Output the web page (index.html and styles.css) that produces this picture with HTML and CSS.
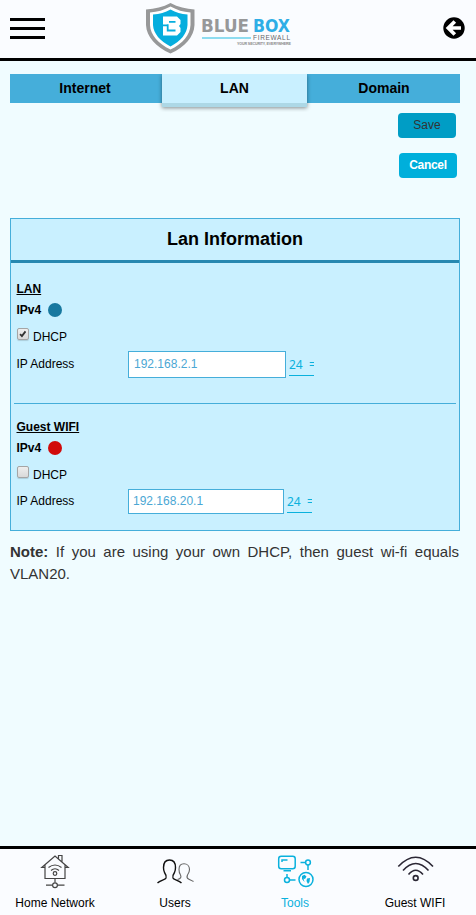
FILE: index.html
```html
<!DOCTYPE html>
<html lang="en">
<head>
<meta charset="utf-8">
<title>Blue Box Firewall</title>
<link rel="stylesheet" href="styles.css">
</head>
<body>
<header class="topbar">
  <div class="menu"><span></span><span></span><span></span></div>
  <svg class="logo" width="150" height="56" viewBox="0 0 150 56">
    <g transform="translate(-1 0)">
      <path d="M25.500 3C33 7 41 9 49.500 9.500V25C49 37 40 47 25.500 53.500C11 47 1.500 37 1 25V9.500C10 9 18 7 25.500 3Z" fill="#979899"/>
      <path d="M25.500 6.500C32 10 38 12 45.500 12.500V25C45 35 38 43.500 25.500 49.500C13 43.500 5.500 35 5 25V12.500C12.500 12 19 10 25.500 6.500Z" fill="#fff"/>
      <path d="M25.500 9.500C31 12.500 36 14 42.500 14.500V25C42 33.500 36 41 25.500 46.500C15 41 8.500 33.500 8 25V14.500C15 14 20 12.500 25.500 9.500Z" fill="#06aede"/>
      <path d="M18 16.500H32L35.500 20V24L34 26L35.500 28V32L32 35.500H18Z" fill="#fff"/>
      <path d="M18 25.300H22.700M24 21.800H30.500M22.700 24.300V30.500H30.500" fill="none" stroke="#06aede" stroke-width="1.800"/>
    </g>
    <text class="brand" x="55" y="32" textLength="48" lengthAdjust="spacingAndGlyphs" fill="#979899">BLUE</text>
    <text class="brand" x="107" y="32" textLength="37" lengthAdjust="spacingAndGlyphs" fill="#2eaee6">BOX</text>
    <path d="M56 38H105" stroke="#8edcf0" stroke-width="2"/>
    <text class="sub" x="107" y="40" textLength="37">FIREWALL</text>
    <text class="motto" x="91" y="44.500" textLength="54">YOUR SECURITY, EVERYWHERE</text>
  </svg>
  <svg class="back" width="22" height="22" viewBox="0 0 22 22">
    <circle cx="11" cy="11" r="10.700" fill="#000"/>
    <path d="M11.800 4.500L5.300 11L11.800 17.500M6 11H18" fill="none" stroke="#fff" stroke-width="3.700"/>
  </svg>
</header>
<main class="content">
  <nav class="tabs">
    <div class="tab">Internet</div>
    <div class="tab active">LAN</div>
    <div class="tab">Domain</div>
  </nav>
  <div class="actions">
    <button class="btn save">Save</button>
    <button class="btn cancel">Cancel</button>
  </div>
  <section class="panel">
    <h2>Lan Information</h2>
    <div class="group">
      <h3>LAN</h3>
      <div class="status">IPv4<i class="dot blue"></i></div>
      <div class="check"><svg class="box" width="12" height="12" viewBox="0 0 12 12"><path d="M2.500 6.200L4.700 8.500L9 2.900" fill="none" stroke="#333" stroke-width="2.200"/></svg><span>DHCP</span></div>
      <div class="row">
        <span class="label">IP Address</span>
        <div class="field">192.168.2.1</div>
        <div class="mask"><span>24</span><span class="eq">=</span></div>
      </div>
    </div>
    <div class="group guest">
      <h3>Guest WIFI</h3>
      <div class="status">IPv4<i class="dot red"></i></div>
      <div class="check"><svg class="box" width="12" height="12"></svg><span>DHCP</span></div>
      <div class="row">
        <span class="label">IP Address</span>
        <div class="field">192.168.20.1</div>
        <div class="mask"><span>24</span><span class="eq">=</span></div>
      </div>
    </div>
  </section>
  <p class="note"><b>Note:</b> If you are using your own DHCP, then guest wi-fi equals VLAN20.</p>
</main>
<footer class="bottombar">
  <div class="item">
    <svg width="40" height="40" viewBox="0 0 40 40" fill="none" stroke="#444" stroke-width="1.200">
      <path d="M10 16V29.500H30V16M10 18.500H6.800L20 7L33.200 18.500H30M23.500 9.500V6.500H27V13M20 29.500V33.500M11 36.200H17M22.500 36.200H29.500"/>
      <circle cx="20" cy="36.200" r="2.400"/><circle cx="20" cy="24.500" r="1.800"/>
      <path d="M13.500 18.500Q20 13.500 26.500 18.500M16 21.500Q20 18 24 21.500"/>
    </svg>
    <span>Home Network</span>
  </div>
  <div class="item">
    <svg width="40" height="40" viewBox="0 0 40 40" fill="none" stroke="#111" stroke-width="1.400">
      <path d="M2.500 34C5 31.500 10.500 30.500 11 29C11.500 27 11 25.500 9.500 23.500C8.500 21.500 8.500 21 8.500 18.500C8.500 13.500 11 11 14.500 11C18 11 20.500 13.500 20.500 18.500C20.500 21 20.500 21.500 19.500 23.500C18 25.500 17.500 27 18 29C18.500 30.500 24 31.500 26.500 34"/>
      <path stroke="#666" stroke-width="1.100" d="M22.500 30.500C26 29.500 26.500 28 25.500 26C24 24 24 22.500 24 20.500C24 17 26 14.800 29 14.800C32 14.800 34.500 17 34.500 20.500C34.500 22.500 34 24 32.500 26C31.500 28 31.500 29 33.500 30C35.500 31 37 31.500 38.500 32.500"/>
    </svg>
    <span>Users</span>
  </div>
  <div class="item current">
    <svg width="40" height="40" viewBox="0 0 40 40" fill="none" stroke="#0ab1dd" stroke-width="1.500">
      <rect x="3.700" y="7.300" width="16.500" height="12.500" rx="2.500"/>
      <path d="M7 13V11H12.500M8.500 21.700H16M25.500 13.500H30.500M33 16V21M12 25V28M14.500 31H20.500"/>
      <circle cx="33" cy="13.500" r="2.400"/><circle cx="12" cy="31" r="2.500"/>
      <circle cx="31" cy="30.500" r="7"/>
      <path fill="#0ab1dd" stroke="none" d="M27 27L29.500 25.800L31.500 27.500L30 30L28.500 29.500L29.500 33L27 30ZM32 29.500L35 29L34.500 33L33 35L31.500 32Z"/>
    </svg>
    <span>Tools</span>
  </div>
  <div class="item">
    <svg width="40" height="40" viewBox="0 0 40 40" fill="none" stroke="#2b2735" stroke-width="1.600">
      <path d="M3.300 17.500Q20.700 -1 38 17.500M8 21.500Q20.700 7.500 33.500 21.500M13.500 25.500Q20.700 17 28 25.500"/>
      <circle cx="20.700" cy="29" r="2.400"/>
    </svg>
    <span>Guest WIFI</span>
  </div>
</footer>
</body>
</html>
```
FILE: styles.css
```css
* { box-sizing: border-box; }
body {
  margin: 0;
  height: 915px;
  display: flex;
  flex-direction: column;
  overflow: hidden;
  background: #f0fcff;
  color: #000;
  font: 12px/14px "Liberation Sans", Arial, sans-serif;
}
.topbar {
  height: 61px;
  flex: none;
  display: flex;
  padding: 0 11px 0 10px;
  background: #fafcff;
  border-bottom: 3px solid #000;
}
.menu { width: 35px; margin-top: 18px; display: flex; flex-direction: column; gap: 6px; }
.menu span { height: 3px; background: #000; }
.logo { margin-left: 101px; }
.brand { font: bold 17.5px "DejaVu Sans", Arial, sans-serif; }
.sub { font: 6.5px "Liberation Sans", Arial, sans-serif; fill: #66676a; }
.motto { font: bold 3.6px "Liberation Sans", Arial, sans-serif; fill: #888; }
.back { margin: 17px 0 0 auto; }
.content { flex: 1; padding: 13px 16px 0 10px; }
.tabs { display: grid; grid-template-columns: 152px 145px 153px; align-items: start; height: 29px; }
.tab {
  height: 29px;
  background: #45aeda;
  font-size: 14px;
  font-weight: bold;
  line-height: 29px;
  text-align: center;
}
.tab:first-child { padding-right: 2px; }
.tab:last-child { padding-left: 1px; }
.active {
  position: relative;
  height: 33px;
  background: #c9f0ff;
  border-bottom: 4px solid #add8e6;
  box-shadow: 0 1px 4px rgba(0, 0, 0, .45);
  clip-path: inset(0 -5px -5px -5px);
}
.actions { display: flex; flex-direction: column; align-items: flex-end; gap: 15px; margin-top: 10px; }
.btn {
  width: 58px;
  height: 25px;
  padding: 0;
  border: 0;
  border-radius: 4px;
  font: 12px/23px "Liberation Sans", Arial, sans-serif;
}
.save { margin-right: 4px; background: #009dc5; color: #333; }
.cancel { margin-right: 3px; background: #00afdb; color: #fff; font-weight: bold; letter-spacing: -.3px; }
.panel { height: 313px; margin-top: 40px; border: 1px solid #45aeda; background: #c9f0ff; }
h2 {
  height: 44px;
  margin: 0;
  border-bottom: 3px solid #2788b0;
  font-size: 18px;
  line-height: 40px;
  text-align: center;
}
.group { height: 141px; margin: 0 3px; padding: 19px 3px 0 2.5px; border-bottom: 1px solid #45aeda; }
.guest { height: auto; padding-top: 16px; border: 0; }
h3 { margin: 0; font-size: 12px; line-height: 14px; text-decoration: underline; }
.status { display: flex; align-items: center; height: 14px; margin-top: 7px; font-weight: bold; }
.dot { width: 14px; height: 14px; margin-left: 6.5px; border-radius: 50%; }
.blue { background: #17789f; }
.red { background: #d10a0a; }
.check { display: flex; gap: 4px; margin-top: 11px; margin-left: .5px; height: 20px; }
.check span { padding-top: 2px; }
.box {
  border: 1px solid #a5a5a5;
  border-radius: 2px;
  background: linear-gradient(#eee, #d9d9d9);
  box-shadow: 0 1px 1px rgba(0, 0, 0, .15);
}
.row { display: flex; margin-top: 3px; }
.label { width: 111.5px; padding-top: 6px; }
.field {
  width: 158px;
  height: 27px;
  padding-left: 5px;
  border: 1px solid #45aeda;
  background: #fff;
  color: #4ba7d4;
  line-height: 25px;
}
.mask {
  display: flex;
  justify-content: space-between;
  width: 25px;
  height: 25px;
  margin-left: 3px;
  border-bottom: 1px solid #0ab1dd;
  color: #0ab1dd;
  font: 12px/27px "Noto Sans", "Open Sans", sans-serif;
}
.eq { width: 5px; overflow: hidden; }
.guest .label { padding-top: 5px; }
.guest .field { width: 156px; height: 25px; padding-left: 4px; line-height: 23px; }
.guest .mask { height: 24px; line-height: 26px; }
.note { margin: 10px 0 0; width: 449px; color: #333; font-size: 15px; line-height: 22px; text-align: justify; }
.bottombar {
  display: grid;
  grid-template-columns: repeat(4, 120px);
  flex: none;
  height: 69px;
  border-top: 3px solid #000;
  background: #fafcff;
}
.item { display: flex; flex-direction: column; align-items: center; margin-left: -5px; margin-right: 5px; }
.item svg { margin-right: 1px; }
.item span { margin-top: 7px; }
.current { color: #0ab1dd; }
```
